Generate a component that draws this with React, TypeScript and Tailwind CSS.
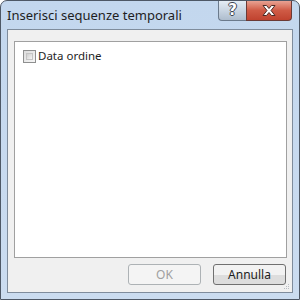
const font = { fontFamily: '"Noto Sans", "Open Sans", sans-serif' };

function HelpButton() {
  return (
    <div className="flex h-[20px] w-[28px] items-center justify-center rounded-bl-[4px] border border-t-0 border-r-0 border-[#6b7a8c] bg-gradient-to-b from-[#e4ecf5] via-[#c9d5e2] to-[#aebdcd]">
      <span
        className="text-[15px] font-bold leading-none text-white [text-shadow:1px_0_0_#3d4552,-1px_0_0_#3d4552,0_1px_0_#3d4552,0_-1px_0_#3d4552]"
        style={{ fontFamily: '"DejaVu Sans", sans-serif' }}
      >
        ?
      </span>
    </div>
  );
}

function CloseButton() {
  return (
    <div className="flex h-[20px] w-[46px] items-center justify-center rounded-br-[4px] border border-t-0 border-[#6b3a36] bg-gradient-to-b from-[#e8a293] via-[#cf5a45] to-[#c0432f]">
      <svg width="14" height="11" viewBox="0 0 14 11">
        <path
          d="M1 0.5h3.5l2.5 3 2.5-3H13l-4 5 4 5H9.5L7 7.5l-2.5 3H1l4-5z"
          fill="#ffffff"
          stroke="#4b2a25"
          strokeWidth="1"
          strokeLinejoin="round"
        />
      </svg>
    </div>
  );
}

function Grip() {
  const dots = [
    [4, 0],
    [2, 2],
    [4, 2],
    [0, 4],
    [2, 4],
    [4, 4],
  ];
  return (
    <svg width="6" height="6" viewBox="0 0 6 6" className="absolute bottom-[2px] right-[2px]">
      {dots.map(([x, y]) => (
        <rect key={`${x}-${y}`} x={x} y={y} width="1" height="1" fill="#b8bcc2" />
      ))}
    </svg>
  );
}

export default function App() {
  return (
    <div
      className="h-[300px] w-[300px] overflow-hidden rounded-t-[7px] border border-[#4e5866] bg-gradient-to-b from-[#c3d7ee] to-[#cbdcf0]"
      style={font}
    >
      <div className="flex h-[28px] items-start">
        <span className="ml-[6px] mt-[6px] text-[13px] leading-[16px] text-[#1e1e1e]">
          Inserisci sequenze temporali
        </span>
        <div className="ml-auto mr-[7px] flex">
          <HelpButton />
          <CloseButton />
        </div>
      </div>

      <div className="ml-[6px] h-[264px] w-[286px] border border-[#7f8c9c] bg-[#f0f0f0]">
        <div className="relative flex h-full flex-col pl-[6px] pt-[11px]">
          <div className="h-[217px] w-[273px] border border-[#a0a0a0] bg-white pl-[8px] pt-[7px]">
            <label className="flex items-center gap-[2px] text-[11.5px] text-[#1e1e1e]">
              <span className="h-[13px] w-[13px] border border-[#8e8f8f] bg-gradient-to-br from-[#dcdcdc] to-[#f6f6f6] p-[2px]">
                <span className="block h-full w-full border border-[#c4c4c4] bg-gradient-to-br from-[#cfcfcf] to-[#f4f4f4]" />
              </span>
              <span className="leading-[14px]">Data ordine</span>
            </label>
          </div>

          <div className="mt-[6px] flex gap-[12px] pl-[114px]">
            <div className="flex h-[21px] w-[73px] items-center justify-center rounded-[3px] border border-[#adb2b5] bg-[#f4f4f4] text-[12px] text-[#a0a0a0]">
              OK
            </div>
            <div className="flex h-[21px] w-[73px] items-center justify-center rounded-[3px] border border-[#707070] bg-gradient-to-b from-[#f2f2f2] from-50% to-[#dddddd] to-50% text-[12px] text-[#1e1e1e]">
              Annulla
            </div>
          </div>
          <Grip />
        </div>
      </div>
    </div>
  );
}
